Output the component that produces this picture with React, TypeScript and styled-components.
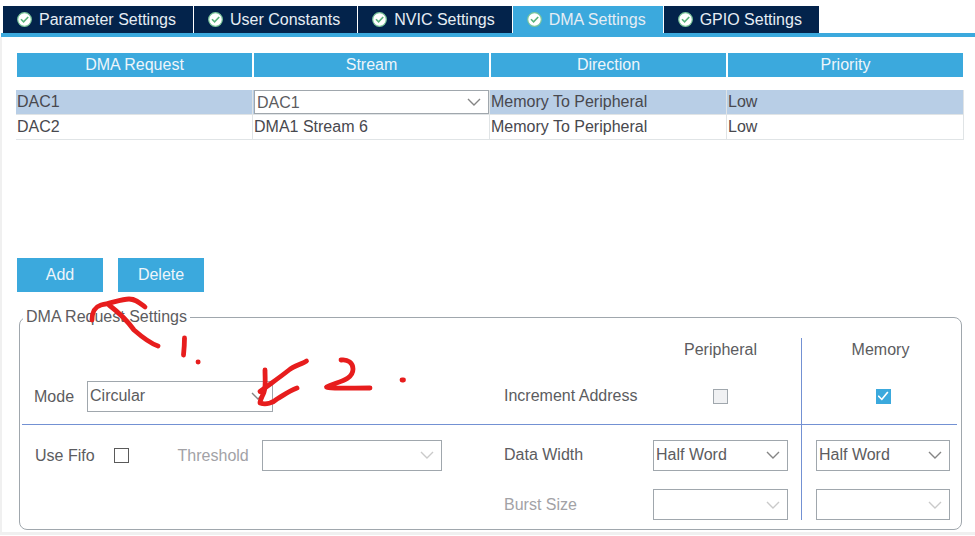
import React, { useId, useState } from "react";
import styled, { createGlobalStyle } from "styled-components";

const blue = "#3ba9dd";
const navy = "#03234b";
const textGrey = "#5c5c60";
const mutedGrey = "#a2a2a6";
const frameGrey = "#a0a7ad";
const ruleBlue = "#7391d3";

const GlobalStyle = createGlobalStyle`
  *, *::before, *::after { box-sizing: border-box; }
  body {
    margin: 0;
    background: #fff;
    color: ${textGrey};
    font: 16px/24px "Liberation Sans", Arial, sans-serif;
  }
  button, select, input { font: inherit; color: inherit; margin: 0; }
`;

const Page = styled.main`
  position: relative;
  padding-top: 6px;
  border-bottom: 3px solid #f0f0f0;
`;

const TabBar = styled.nav`
  display: flex;
  gap: 1px;
  margin-left: 1px;
  padding-left: 2px;
  border-bottom: 4px solid ${blue};
`;

const Tab = styled.button<{ $active: boolean }>`
  display: flex;
  align-items: center;
  gap: 7px;
  height: 27px;
  padding: 0 17px 0 14px;
  border: 0;
  background: ${(p) => (p.$active ? blue : navy)};
  color: #e6edf4;
  white-space: nowrap;
`;

const Panel = styled.section`
  padding: 16px 11px 2px 14px;
  border-left: 2px solid #f0f0f0;
`;

const RequestTable = styled.table`
  width: 100%;
  table-layout: fixed;
  border-collapse: separate;
  border-spacing: 0;
  color: #48484e;

  tbody::before {
    content: "";
    display: block;
    height: 13px;
  }
`;

const HeadCell = styled.th`
  height: 24px;
  padding: 0;
  border: solid #fff;
  border-width: 0 1px;
  background: ${blue};
  background-clip: padding-box;
  color: #eef5fa;
  font-weight: normal;
`;

const Cell = styled.td<{ $selected: boolean }>`
  height: 25px;
  padding: 0 0 0 1px;
  border: solid #e0e4e6;
  border-width: 0 1px 1px 0;
  background: ${(p) => (p.$selected ? "#b8cee6" : "#fff")};
`;

const TableArea = styled.div`
  min-height: 205px;
`;

const Actions = styled.div`
  display: flex;
  gap: 15px;
  padding-left: 1px;
`;

const ActionButton = styled.button`
  width: 86px;
  height: 34px;
  padding: 0;
  border: 0;
  background: ${blue};
  color: #eef5fa;
`;

const Settings = styled.fieldset`
  min-width: 0;
  margin: 13px 2px 0 3px;
  padding: 9px 4px 9px 2px;
  border: 1px solid ${frameGrey};
  border-radius: 8px;
`;

const Legend = styled.legend`
  margin-left: 1px;
  padding: 0 3px;
`;

const SettingsGrid = styled.div`
  display: grid;
  grid-template-columns: minmax(420px, 1fr) 149px 148px 156px;
  grid-template-rows: 30px 57px 60px 35px;
`;

const GridCell = styled.div<{ $divided?: boolean; $ruled?: boolean; $place?: string }>`
  display: flex;
  align-items: ${(p) => p.$place ?? "center"};
  border-left: ${(p) => (p.$divided ? `1px solid ${ruleBlue}` : "0")};
  border-bottom: ${(p) => (p.$ruled ? `1px solid ${ruleBlue}` : "0")};
`;

const FieldCell = styled(GridCell)`
  padding-left: 12px;
`;

const PortCell = styled(GridCell)`
  justify-content: center;
  padding-right: 13px;
`;

const MemoryCell = styled(GridCell)`
  justify-content: center;
  padding: 0 7px 0 14px;
`;

const MemoryTitle = styled(MemoryCell)`
  padding-right: 12px;
`;

const Label = styled.label<{ $muted?: boolean; $gap?: number }>`
  margin-left: ${(p) => p.$gap ?? 0}px;
  color: ${(p) => (p.$muted ? mutedGrey : "inherit")};
  line-height: 31px;
  white-space: nowrap;
`;

const SelectFrame = styled.span<{ $width: string; $height: number; $gap: number }>`
  position: relative;
  display: block;
  width: ${(p) => p.$width};
  height: ${(p) => p.$height}px;
  margin-left: ${(p) => p.$gap}px;
`;

const NativeSelect = styled.select`
  appearance: none;
  display: block;
  width: 100%;
  height: 100%;
  padding: 0 28px 0 2px;
  border: 1px solid ${frameGrey};
  border-radius: 0;
  background: #fff;
  color: ${textGrey};
  opacity: 1;
`;

const Chevron = styled.svg<{ $muted: boolean }>`
  position: absolute;
  top: 50%;
  right: 8px;
  width: 14px;
  height: 8px;
  margin-top: -4px;
  fill: none;
  stroke: ${(p) => (p.$muted ? "#cacaca" : "#858585")};
  stroke-width: 1.4;
  pointer-events: none;
`;

const CheckBox = styled.input<{ $gap?: number }>`
  appearance: none;
  display: grid;
  place-items: center;
  width: 15px;
  height: 15px;
  margin-left: ${(p) => p.$gap ?? 0}px;
  border: 1px solid #5a5a5a;
  background: #fff;

  &:disabled {
    border-color: ${frameGrey};
    background: #f0f1f3;
  }
  &:checked {
    border-color: ${blue};
    background: ${blue};
  }
  &:checked::before {
    content: "";
    width: 11px;
    height: 10px;
    background: #fff;
    clip-path: polygon(0 52%, 12% 42%, 38% 72%, 88% 4%, 100% 14%, 40% 96%);
  }
`;

const Ink = styled.svg`
  position: absolute;
  top: 0;
  left: 0;
  width: 420px;
  height: 420px;
  fill: none;
  stroke: #e71d1d;
  stroke-width: 4.8;
  stroke-linecap: round;
  stroke-linejoin: round;
  pointer-events: none;
`;

function StatusIcon() {
  return (
    <svg width="15" height="15" viewBox="0 0 15 15" aria-hidden="true">
      <circle cx="7.5" cy="7.5" r="6.8" fill="#fff" stroke="#7cc79a" strokeWidth="1.2" />
      <path d="M4 7.2 6.6 9.8 11.2 5" fill="none" stroke="#58b27a" strokeWidth="1.6" />
    </svg>
  );
}

interface SelectProps {
  id?: string;
  label?: string;
  options: string[];
  width?: string;
  height?: number;
  gap?: number;
  disabled?: boolean;
}

function Select({ id, label, options, width = "100%", height = 31, gap = 0, disabled = false }: SelectProps) {
  return (
    <SelectFrame $width={width} $height={height} $gap={gap}>
      <NativeSelect id={id} aria-label={label} disabled={disabled}>
        {options.map((option) => (
          <option key={option}>{option}</option>
        ))}
      </NativeSelect>
      <Chevron $muted={disabled} viewBox="0 0 14 8" aria-hidden="true">
        <path d="M1 1 7 7 13 1" />
      </Chevron>
    </SelectFrame>
  );
}

const tabs = ["Parameter Settings", "User Constants", "NVIC Settings", "DMA Settings", "GPIO Settings"];
const columns = ["DMA Request", "Stream", "Direction", "Priority"];
const requests = [
  { name: "DAC1", stream: "DAC1", direction: "Memory To Peripheral", priority: "Low" },
  { name: "DAC2", stream: "DMA1 Stream 6", direction: "Memory To Peripheral", priority: "Low" },
];

export default function App() {
  const uid = useId();
  const [activeTab, setActiveTab] = useState("DMA Settings");
  const [selected, setSelected] = useState("DAC1");

  return (
    <Page>
      <GlobalStyle />
      <TabBar>
        {tabs.map((tab) => (
          <Tab key={tab} type="button" $active={tab === activeTab} onClick={() => setActiveTab(tab)}>
            <StatusIcon />
            {tab}
          </Tab>
        ))}
      </TabBar>
      <Panel>
        <TableArea>
          <RequestTable>
            <thead>
              <tr>
                {columns.map((column) => (
                  <HeadCell key={column} scope="col">{column}</HeadCell>
                ))}
              </tr>
            </thead>
            <tbody>
              {requests.map((request) => {
                const isSelected = request.name === selected;
                return (
                  <tr key={request.name} onClick={() => setSelected(request.name)}>
                    <Cell $selected={isSelected}>{request.name}</Cell>
                    <Cell $selected={isSelected}>
                      {isSelected ? (
                        <Select label="Stream" options={[request.stream]} height={24} />
                      ) : (
                        request.stream
                      )}
                    </Cell>
                    <Cell $selected={isSelected}>{request.direction}</Cell>
                    <Cell $selected={isSelected}>{request.priority}</Cell>
                  </tr>
                );
              })}
            </tbody>
          </RequestTable>
        </TableArea>
        <Actions>
          <ActionButton type="button">Add</ActionButton>
          <ActionButton type="button">Delete</ActionButton>
        </Actions>
        <Settings>
          <Legend>DMA Request Settings</Legend>
          <SettingsGrid>
            <GridCell />
            <GridCell />
            <PortCell $place="flex-start">Peripheral</PortCell>
            <MemoryTitle $divided $place="flex-start">Memory</MemoryTitle>

            <FieldCell $ruled>
              <Label htmlFor={`${uid}-mode`}>Mode</Label>
              <Select id={`${uid}-mode`} options={["Circular", "Normal"]} width="186px" gap={13} />
            </FieldCell>
            <GridCell $ruled>Increment Address</GridCell>
            <PortCell $ruled>
              <CheckBox type="checkbox" aria-label="Increment Address, Peripheral" disabled />
            </PortCell>
            <MemoryCell $divided $ruled>
              <CheckBox type="checkbox" aria-label="Increment Address, Memory" defaultChecked />
            </MemoryCell>

            <FieldCell>
              <Label htmlFor={`${uid}-fifo`} $gap={1}>Use Fifo</Label>
              <CheckBox id={`${uid}-fifo`} type="checkbox" $gap={19} />
              <Label htmlFor={`${uid}-threshold`} $muted $gap={49}>Threshold</Label>
              <Select id={`${uid}-threshold`} options={[""]} width="180px" gap={13} disabled />
            </FieldCell>
            <GridCell>Data Width</GridCell>
            <PortCell>
              <Select label="Data Width, Peripheral" options={["Half Word", "Byte", "Word"]} />
            </PortCell>
            <MemoryCell $divided>
              <Select label="Data Width, Memory" options={["Half Word", "Byte", "Word"]} />
            </MemoryCell>

            <GridCell />
            <GridCell $place="flex-end">
              <Label as="span" $muted>Burst Size</Label>
            </GridCell>
            <PortCell $place="flex-end">
              <Select label="Burst Size, Peripheral" options={[""]} disabled />
            </PortCell>
            <MemoryCell $divided $place="flex-end">
              <Select label="Burst Size, Memory" options={[""]} disabled />
            </MemoryCell>
          </SettingsGrid>
        </Settings>
      </Panel>
      <Ink viewBox="0 0 420 420" aria-hidden="true">
        <path d="M92 320C92 311 95 307 101 305C112 303 122 299 129 299C136 299 140 303 145 307" />
        <path d="M109 305C118 312 127 320 134 330C142 337 149 343 158 346" />
        <path d="M184.500 338C184.500 345 184 350 183.500 355" />
        <path d="M198 362H198.200" />
        <path d="M265 370C265 379 266 387 264 392C262 397 260 400 260 403C266 405 273 403 277 399C284 395 289 391 297 388" />
        <path d="M306.500 361C302 364 294 366 289 370C279 378 270 384 260 391.500" />
        <path d="M341 360C348 359 353 363 353 369C353 381 335 382 326.500 387C328 388.500 345 388 370 388" />
        <path d="M402 380H403.500" />
      </Ink>
    </Page>
  );
}
